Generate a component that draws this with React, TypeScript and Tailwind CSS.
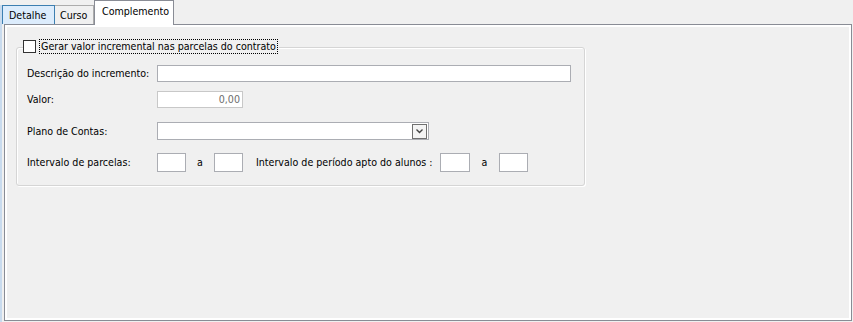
import React from "react";

const font = { fontFamily: "'DejaVu Sans Condensed', 'Liberation Sans', sans-serif" };

function Input({ w, h = 17, children, light }: { w: number; h?: number; children?: React.ReactNode; light?: boolean }) {
  return (
    <div
      className={`bg-white border ${light ? "border-[#c8c8c8]" : "border-[#abadb3]"} flex items-center justify-end pr-[2px] text-[#6d6d6d]`}
      style={{ width: w, height: h }}
    >
      {children}
    </div>
  );
}

export default function App() {
  return (
    <div className="w-[853px] h-[322px] bg-[#f0f0f0] relative overflow-hidden text-[10.6px] text-black leading-none whitespace-nowrap" style={font}>
      <div className="absolute left-0 top-[5px] w-[2px] h-[317px] bg-[#c9dbee]" />
      {/* tab strip */}
      <div className="flex items-end h-[24px] pl-[2px] relative z-10">
        <div className="w-[53px] h-[19px] border border-b-0 border-[#3c7fb1] bg-[#dcecfc] flex items-center pl-[6px] pt-[1px]">Detalhe</div>
        <div className="w-[39px] h-[19px] border border-b-0 border-l-0 border-[#acacac] bg-[#f0f0f0] flex items-center pl-[5px] pt-[1px]">Curso</div>
        <div className="w-[80px] h-[25px] -mb-[1px] border border-b-0 border-[#898c95] bg-white flex items-start pt-[5px] pl-[7px]">Complemento</div>
      </div>
      {/* panel */}
      <div className="ml-[4px] w-[848px] h-[297px] border border-[#898c95] bg-white p-[2px] pt-0">
        <div className="w-full h-full bg-[#f0f0f0] border-t-2 border-white">
          <div className="pl-[9px] pt-[12px]">
            {/* legend */}
            <div className="relative z-10 flex items-center ml-[7px] w-fit bg-[#f0f0f0] pr-[1px]">
              <div className="w-[13px] h-[13px] bg-white border border-[#333333]" />
              <div className="ml-[3px] px-[1px] h-[15px] flex items-center border border-dotted border-black">Gerar valor incremental nas parcelas do contrato</div>
            </div>
            {/* group box */}
            <div className="-mt-[7px] w-[569px] h-[139px] rounded-[3px] border border-[#d5d5d5] shadow-[inset_1px_1px_0_#ffffff,1px_1px_0_#ffffff]">
              <div className="pl-[10px] pt-[17px] flex flex-col">
                <div className="flex items-center h-[17px]">
                  <div className="w-[130px]">Descrição do incremento:</div>
                  <Input w={414} />
                </div>
                <div className="flex items-center h-[17px] mt-[9px]">
                  <div className="w-[130px]">Valor:</div>
                  <Input w={86} light>0,00</Input>
                </div>
                <div className="flex items-center h-[18px] mt-[14px]">
                  <div className="w-[130px]">Plano de Contas:</div>
                  <div className="w-[272px] h-[18px] bg-white border border-[#abadb3] flex justify-end items-center pr-[1px]">
                    <div className="w-[15px] h-[15px] border border-[#707070] bg-[#f4f4f4] flex items-center justify-center">
                      <svg width="7" height="5" viewBox="0 0 7 5">
                        <path d="M0.5 0.5 L3.5 3.5 L6.5 0.5" fill="none" stroke="#444" strokeWidth="1.4" />
                      </svg>
                    </div>
                  </div>
                </div>
                <div className="flex items-center h-[19px] mt-[13px]">
                  <div className="w-[130px]">Intervalo de parcelas:</div>
                  <Input w={29} h={19} />
                  <div className="w-[28px] text-center">a</div>
                  <Input w={29} h={19} />
                  <div className="ml-[13px] w-[184px]">Intervalo de período apto do alunos :</div>
                  <Input w={30} h={19} />
                  <div className="w-[29px] text-center">a</div>
                  <Input w={29} h={19} />
                </div>
              </div>
            </div>
          </div>
        </div>
      </div>
    </div>
  );
}
